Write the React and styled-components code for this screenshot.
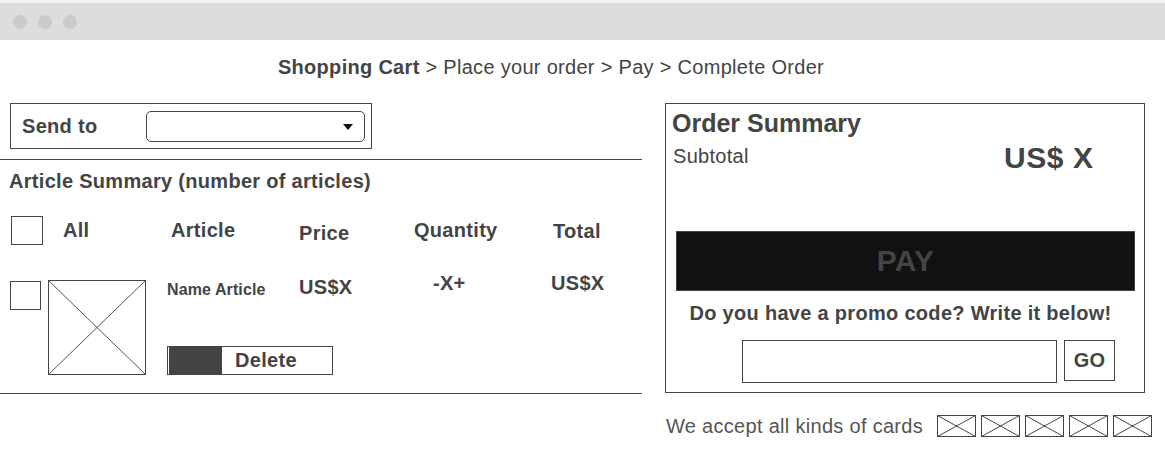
import React from "react";
import styled, { createGlobalStyle } from "styled-components";

const GlobalStyle = createGlobalStyle`
  html, body {
    margin: 0;
    padding: 0;
    background: #fff;
  }
  body {
    font-family: "Liberation Sans", Arial, sans-serif;
    letter-spacing: 0.3px;
    color: #444;
  }
`;

export default function App() {
  return (
    <>
      <GlobalStyle />
      <TitleBar>
        <Dot />
        <Dot />
        <Dot />
      </TitleBar>
      <Breadcrumb>
        <b>Shopping Cart</b> &gt; Place your order &gt; Pay &gt; Complete Order
      </Breadcrumb>
      <Main>
        <CartColumn>
          <SendToBox>
            <SendLabel>Send to</SendLabel>
            <Select>
              <Caret />
            </Select>
          </SendToBox>
          <Divider $top={10} />
          <SectionTitle>Article Summary (number of articles)</SectionTitle>
          <HeaderRow>
            <Checkbox $w={32} $left={11} />
            <HeaderCell $x={20} $w={108}>All</HeaderCell>
            <HeaderCell $w={128}>Article</HeaderCell>
            <HeaderCell $w={115} $dy={3}>Price</HeaderCell>
            <HeaderCell $w={139}>Quantity</HeaderCell>
            <HeaderCell $dy={1}>Total</HeaderCell>
          </HeaderRow>
          <ItemRow>
            <Checkbox $w={31} $left={10} $top={10} />
            <Thumb viewBox="0 0 98 95">
              <rect x="0.5" y="0.5" width="97" height="94" fill="none" stroke="#444" />
              <line x1="0.5" y1="0.5" x2="97.5" y2="94.5" stroke="#555" />
              <line x1="97.5" y1="0.5" x2="0.5" y2="94.5" stroke="#555" />
            </Thumb>
            <ArticleInfo>
              <ArticleName>Name Article</ArticleName>
              <DeleteButton>
                <DeleteSwatch />
                Delete
              </DeleteButton>
            </ArticleInfo>
            <ItemCell $w={134} $dy={4}>US$X</ItemCell>
            <ItemCell $w={118}>-X+</ItemCell>
            <ItemCell>US$X</ItemCell>
          </ItemRow>
          <Divider $top={18} />
        </CartColumn>

        <SideColumn>
          <SummaryBox>
            <SummaryTitle>Order Summary</SummaryTitle>
            <SubtotalRow>
              <SubtotalLabel>Subtotal</SubtotalLabel>
              <SubtotalAmount>US$ X</SubtotalAmount>
            </SubtotalRow>
            <PayButton>PAY</PayButton>
            <PromoText>Do you have a promo code? Write it below!</PromoText>
            <PromoRow>
              <PromoInput />
              <GoButton>GO</GoButton>
            </PromoRow>
          </SummaryBox>
          <CardsRow>
            <CardsText>We accept all kinds of cards</CardsText>
            <CardList>
              {[0, 1, 2, 3, 4].map((i) => (
                <CardIcon key={i} viewBox="0 0 39 22">
                  <rect x="0.5" y="0.5" width="38" height="21" fill="none" stroke="#444" />
                  <line x1="0.5" y1="0.5" x2="38.5" y2="21.5" stroke="#444" />
                  <line x1="38.5" y1="0.5" x2="0.5" y2="21.5" stroke="#444" />
                </CardIcon>
              ))}
            </CardList>
          </CardsRow>
        </SideColumn>
      </Main>
    </>
  );
}

const TitleBar = styled.div`
  display: flex;
  align-items: center;
  gap: 11px;
  height: 37px;
  padding-left: 13px;
  background: #dddddd;
  border-top: 3px solid #f0f0f0;
`;

const Dot = styled.span`
  width: 14px;
  height: 14px;
  border-radius: 50%;
  background: #cbcbcb;
`;

const Breadcrumb = styled.div`
  margin-top: 15px;
  padding-right: 63px;
  text-align: center;
  font-size: 20px;
  line-height: 24px;
`;

const Main = styled.div`
  display: flex;
  align-items: flex-start;
  margin-top: 24px;
`;

const CartColumn = styled.div`
  width: 642px;
`;

const SendToBox = styled.div`
  display: flex;
  align-items: center;
  box-sizing: border-box;
  width: 362px;
  height: 46px;
  margin-left: 10px;
  padding-left: 11px;
  border: 1px solid #444;
`;

const SendLabel = styled.span`
  width: 124px;
  font-size: 20px;
  font-weight: bold;
`;

const Select = styled.div`
  position: relative;
  box-sizing: border-box;
  width: 219px;
  height: 31px;
  border: 1px solid #444;
  border-radius: 5px;
`;

const Caret = styled.span`
  position: absolute;
  right: 11px;
  top: 12px;
  border-left: 5px solid transparent;
  border-right: 5px solid transparent;
  border-top: 6px solid #111;
`;

const Divider = styled.hr`
  margin: ${(p) => p.$top}px 0 0;
  border: 0;
  border-top: 1px solid #444;
`;

const SectionTitle = styled.div`
  margin-top: 9px;
  padding-left: 9px;
  font-size: 20px;
  line-height: 24px;
  font-weight: bold;
`;

const HeaderRow = styled.div`
  display: flex;
  align-items: flex-start;
  margin-top: 23px;
`;

const Checkbox = styled.div`
  flex: none;
  box-sizing: border-box;
  width: ${(p) => p.$w}px;
  height: 29px;
  margin-left: ${(p) => p.$left}px;
  margin-top: ${(p) => p.$top || 0}px;
  border: 1px solid #444;
`;

const HeaderCell = styled.div`
  flex: none;
  width: ${(p) => (p.$w ? `${p.$w}px` : "auto")};
  margin-left: ${(p) => p.$x || 0}px;
  padding-top: ${(p) => 2 + (p.$dy || 0)}px;
  font-size: 20px;
  line-height: 24px;
  font-weight: bold;
`;

const ItemRow = styled.div`
  display: flex;
  align-items: flex-start;
  margin-top: 26px;
`;

const Thumb = styled.svg`
  flex: none;
  width: 98px;
  height: 95px;
  margin-left: 7px;
  margin-top: 9px;
`;

const ArticleInfo = styled.div`
  flex: none;
  display: flex;
  flex-direction: column;
  width: 132px;
  margin-left: 21px;
  padding-top: 9px;
`;

const ArticleName = styled.div`
  font-size: 16px;
  line-height: 20px;
  font-weight: bold;
  letter-spacing: 0.1px;
`;

const DeleteButton = styled.div`
  display: flex;
  align-items: center;
  box-sizing: border-box;
  width: 166px;
  height: 29px;
  margin-top: 46px;
  padding-left: 1px;
  border: 1px solid #444;
  font-size: 20px;
  font-weight: bold;
`;

const DeleteSwatch = styled.span`
  align-self: stretch;
  width: 53px;
  margin-right: 13px;
  background: #444;
`;

const ItemCell = styled.div`
  flex: none;
  width: ${(p) => (p.$w ? `${p.$w}px` : "auto")};
  padding-top: ${(p) => p.$dy || 0}px;
  font-size: 20px;
  line-height: 24px;
  font-weight: bold;
`;

const SideColumn = styled.div`
  margin-left: 23px;
`;

const SummaryBox = styled.div`
  box-sizing: border-box;
  width: 480px;
  height: 290px;
  padding: 5px 9px 0 6px;
  border: 1px solid #444;
`;

const SummaryTitle = styled.div`
  font-size: 25px;
  line-height: 28px;
  font-weight: bold;
  letter-spacing: 0;
`;

const SubtotalRow = styled.div`
  display: flex;
  align-items: flex-start;
  margin-top: 4px;
  padding-left: 1px;
`;

const SubtotalLabel = styled.div`
  width: 331px;
  margin-top: 3px;
  font-size: 20px;
  line-height: 24px;
`;

const SubtotalAmount = styled.div`
  font-size: 30px;
  line-height: 34px;
  font-weight: bold;
  letter-spacing: 0.6px;
`;

const PayButton = styled.div`
  box-sizing: border-box;
  width: 459px;
  height: 60px;
  margin: 56px 0 0 4px;
  border: 1px solid #444;
  background: #111;
  color: #444;
  font-size: 30px;
  font-weight: bold;
  line-height: 58px;
  text-align: center;
`;

const PromoText = styled.div`
  margin-top: 10px;
  padding-right: 6px;
  font-size: 20px;
  line-height: 24px;
  font-weight: bold;
  text-align: center;
`;

const PromoRow = styled.div`
  display: flex;
  align-items: flex-start;
  gap: 7px;
  margin-top: 15px;
  padding-left: 70px;
`;

const PromoInput = styled.div`
  box-sizing: border-box;
  width: 315px;
  height: 43px;
  border: 1px solid #444;
`;

const GoButton = styled.div`
  box-sizing: border-box;
  width: 51px;
  height: 41px;
  border: 1px solid #444;
  font-size: 20px;
  font-weight: bold;
  line-height: 39px;
  text-align: center;
`;

const CardsRow = styled.div`
  display: flex;
  align-items: center;
  margin-top: 21px;
  padding-left: 1px;
`;

const CardsText = styled.span`
  font-size: 20px;
  line-height: 24px;
  color: #555;
`;

const CardList = styled.div`
  display: flex;
  gap: 5px;
  margin-left: 14px;
`;

const CardIcon = styled.svg`
  width: 39px;
  height: 22px;
`;
